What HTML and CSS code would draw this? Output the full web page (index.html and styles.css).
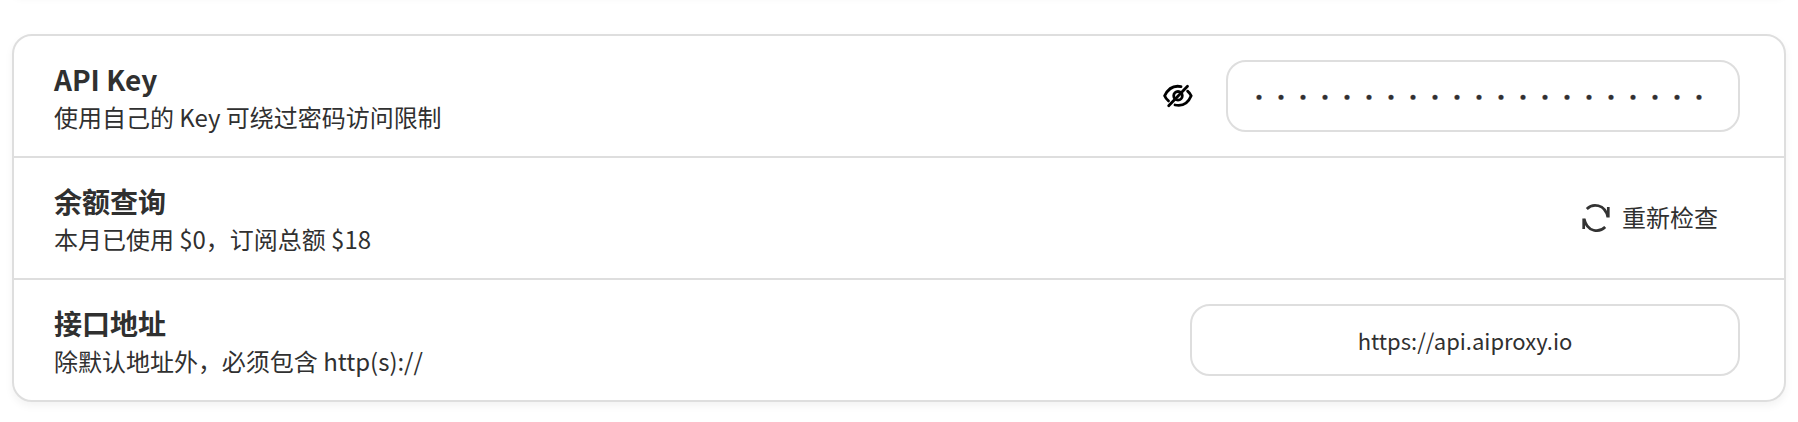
FILE: index.html
```html
<!DOCTYPE html>
<html lang="zh-CN">
<head>
<meta charset="utf-8">
<title>设置</title>
<link rel="stylesheet" href="styles.css">
</head>
<body>
<div class="previous-list"></div>
<main class="list">
  <section class="item">
    <div class="text">
      <div class="title">API Key</div>
      <div class="subtitle">使用自己的 Key 可绕过密码访问限制</div>
    </div>
    <div class="password">
      <svg class="eye" viewBox="0 0 32 28" fill="none" stroke="#000" stroke-width="2.800" stroke-linecap="round" stroke-linejoin="round">
        <path d="M19 4.600C11.500 3 5.800 7.300 2.600 13.800Q4 17 6.500 18.900M25.600 9.200Q28 11.200 29.200 13.800C26 21.500 20 24.500 13 23"/>
        <circle cx="16" cy="13.800" r="4.300"/>
        <path d="M25.500 4.300 6.700 23.700"/>
      </svg>
      <input class="input key" type="password" value="123456789012345678901" aria-label="API Key">
    </div>
  </section>
  <section class="item">
    <div class="text">
      <div class="title">余额查询</div>
      <div class="subtitle">本月已使用 $0，订阅总额 $18</div>
    </div>
    <button class="button">
      <svg class="reload" viewBox="0 0 32 32" fill="none" stroke="#333" stroke-width="2.700" stroke-linecap="butt" stroke-linejoin="miter">
        <path d="M28.300 5V15.500M3.700 16.500V27M6.800 7C12.500 1.200 25 1.500 27.800 15.300M25.200 25C19.500 30.800 7 30.500 4.200 16.700"/>
      </svg>
      <span>重新检查</span>
    </button>
  </section>
  <section class="item">
    <div class="text">
      <div class="title">接口地址</div>
      <div class="subtitle">除默认地址外，必须包含 http(s)://</div>
    </div>
    <input class="input url" type="text" value="https://api.aiproxy.io" aria-label="接口地址">
  </section>
</main>
</body>
</html>
```
FILE: styles.css
```css
* {
  box-sizing: border-box;
}

body {
  margin: 0;
  padding: 0 12px;
  height: 422px;
  overflow: hidden;
  background: #fff;
  color: #303030;
  font-family: "Noto Sans CJK SC", sans-serif;
}

.previous-list {
  height: 20px;
  margin-top: -26px;
  margin-bottom: 40px;
  border-radius: 20px;
  box-shadow: 0 4px 8px rgba(0, 0, 0, 0.05);
}

.list {
  border: 2px solid #dedede;
  border-radius: 20px;
  box-shadow: 0 4px 8px rgba(0, 0, 0, 0.05);
  background: #fff;
}

.item {
  display: flex;
  align-items: center;
  justify-content: space-between;
  height: 122px;
  padding: 0 44px 0 40px;
  border-bottom: 2px solid #dedede;
}

.item:last-child {
  height: 120px;
  border-bottom: 0;
}

.title {
  padding-top: 1px;
  font-size: 28px;
  font-weight: 700;
  line-height: 41px;
}

.subtitle {
  font-size: 24px;
  line-height: 34px;
  letter-spacing: -0.02px;
}

.password {
  display: flex;
  align-items: center;
}

.eye {
  width: 32px;
  height: 28px;
  margin-right: 32px;
}

.input {
  height: 72px;
  padding: 0 20px;
  border: 2px solid #dedede;
  border-radius: 20px;
  background: #fff;
  color: #303030;
  font-family: inherit;
  font-size: 22px;
  text-align: center;
  outline: 0;
}

.key {
  width: 514px;
  padding: 0 28px 2px 20px;
  -webkit-text-stroke: 0.4px #303030;
}

.url {
  width: 550px;
}

.button {
  display: flex;
  align-items: center;
  gap: 10px;
  padding: 0 22px 0 20px;
  border: 0;
  background: transparent;
  color: #303030;
  font-family: inherit;
  font-size: 24px;
}

.button span {
  padding-bottom: 4px;
}

.reload {
  width: 32px;
  height: 32px;
}
```
